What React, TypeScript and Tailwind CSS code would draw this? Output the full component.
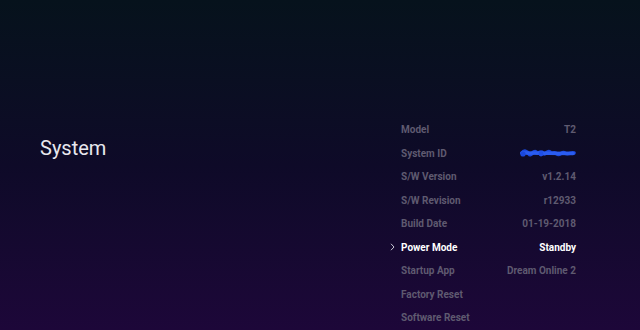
import React from 'react';

const rows: { label: string; value?: string; active?: boolean; redacted?: boolean }[] = [
    { label: 'Model', value: 'T2' },
    { label: 'System ID', redacted: true },
    { label: 'S/W Version', value: 'v1.2.14' },
    { label: 'S/W Revision', value: 'r12933' },
    { label: 'Build Date', value: '01-19-2018' },
    { label: 'Power Mode', value: 'Standby', active: true },
    { label: 'Startup App', value: 'Dream Online 2' },
    { label: 'Factory Reset' },
    { label: 'Software Reset' },
];

const Scribble: React.FC = () => (
    <svg width="57" height="11" viewBox="0 0 57 11" className="block">
        <path
            d="M3 5 C5 2,8 3,10 6 C12 9,14 2,17 4 C19 7,21 2,24 5 C26 8,28 2,31 4 C33 7,35 3,38 6 C41 8,43 3,46 5 C49 7,52 4,55 5"
            stroke="#1a48dc"
            strokeWidth="3.6"
            fill="none"
            strokeLinecap="round"
        />
        <path d="M3 5 L54 5.5" stroke="#2a5cf0" strokeWidth="3.6" strokeLinecap="round" />
        <circle cx="4" cy="6" r="2.6" fill="#1a48dc" />
        <circle cx="22" cy="6" r="2.4" fill="#1f4fe6" />
    </svg>
);

const App: React.FC = () => {
    return (
        <div
            className="w-[640px] h-[330px] overflow-hidden flex bg-gradient-to-b from-[#06121c] via-[#0e0a28] to-[#1d0739]"
            style={{ fontFamily: 'Roboto, "Noto Sans", sans-serif' }}
        >
            <div className="w-[390px] pl-10 pt-[135px]">
                <h1 className="text-[20px] leading-[26px] text-[#e8e8ee]">System</h1>
            </div>
            <div className="w-[186px] pt-[118px]">
                {rows.map((r) => (
                    <div key={r.label} className="h-[23.5px] flex items-center text-[10px] font-bold">
                        <span className="w-[11px] flex items-center">
                            {r.active && (
                                <svg width="5" height="8" viewBox="0 0 5 8">
                                    <path d="M1 0.8 L4 4 L1 7.2" stroke="#c8c8d4" strokeWidth="1" fill="none" />
                                </svg>
                            )}
                        </span>
                        <span className={r.active ? 'text-white' : 'text-[#5f5a70]'}>{r.label}</span>
                        <span className={'ml-auto ' + (r.active ? 'text-white' : 'text-[#5f5a70]')}>
                            {r.redacted ? <Scribble /> : r.value}
                        </span>
                    </div>
                ))}
            </div>
        </div>
    );
};

export default App;
